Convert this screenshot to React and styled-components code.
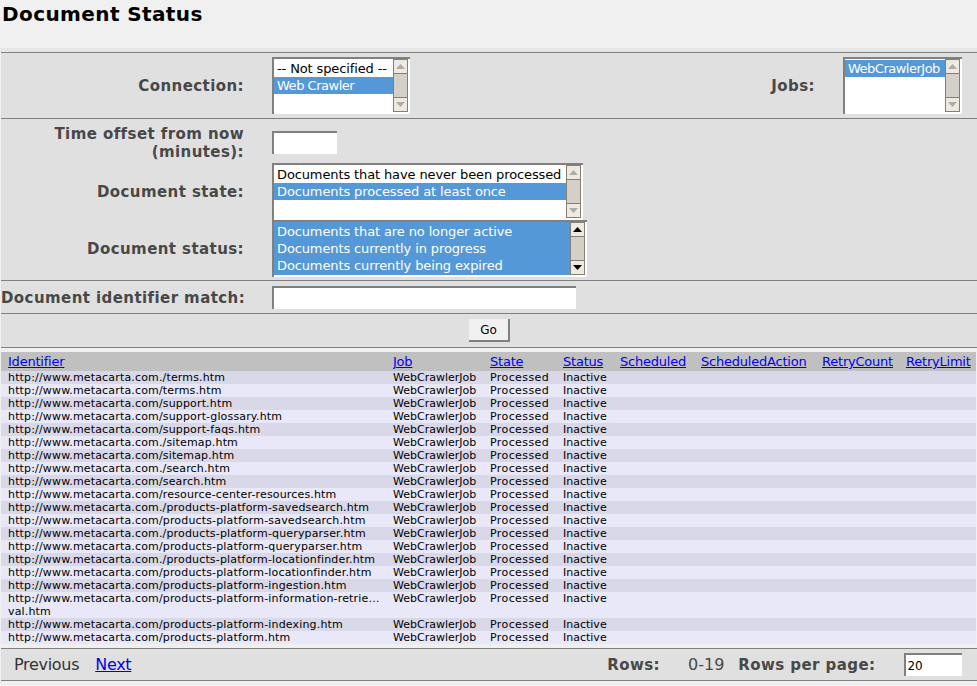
import React from 'react'
import styled, { createGlobalStyle } from 'styled-components'

const GlobalStyle = createGlobalStyle`
html, body {
  margin: 0;
  padding: 0;
  background: #f0f0f0;
  font-family: "DejaVu Sans", sans-serif;
}
* { box-sizing: border-box; }
`

const Page = styled.div`
width: 977px;
height: 686px;
overflow: hidden;
background: #f0f0f0;
`

const TitleBar = styled.h1`
margin: 0;
height: 48px;
padding: 3px 0 0 2px;
font-size: 20px;
line-height: 23px;
letter-spacing: 0.4px;
font-weight: 700;
color: #000;
`

const Strip = styled.div`
height: 4px;
background: #e6e6e6;
`

const Content = styled.div`
margin-left: 1px;
`

const Section = styled.section`
border-top: 1px solid #808080;
background: #e0e0e0;
height: ${(p) => p.$height}px;
`

const FieldStack = styled.div`
display: grid;
grid-template-columns: 243px 1fr;
column-gap: 28px;
align-items: center;
align-content: start;
grid-template-rows: ${(p) => p.$rows};
padding-top: ${(p) => p.$pad || 0}px;
height: 100%;
`

const Label = styled.label`
padding-top: ${(p) => p.$top || 0}px;
font-size: 15px;
line-height: 18px;
letter-spacing: 0.42px;
font-weight: 700;
color: #484848;
text-align: right;
white-space: ${(p) => (p.$nowrap ? 'nowrap' : 'normal')};
`

const ListBox = styled.div`
display: flex;
align-self: start;
width: ${(p) => p.$width}px;
height: 57px;
padding: 0 2px 2px 0;
background: #fff;
border-top: 2px solid #808080;
border-left: 2px solid #808080;
`

const ConnectionRow = styled.div`
display: grid;
grid-template-columns: 243px 415px 100px 1fr;
column-gap: 28px;
align-items: center;
height: 100%;

${ListBox} {
  align-self: center;
}
`

const Options = styled.div`
flex: 1;
min-width: 0;
overflow: hidden;
padding-top: 1px;
background: ${(p) => (p.$filled ? '#5598d7' : '#fff')};
`

const Option = styled.div`
height: 17px;
padding-left: 3px;
font-size: 13px;
line-height: 17px;
letter-spacing: ${(p) => p.$spacing ?? -0.12}px;
white-space: nowrap;
color: ${(p) => (p.$selected ? '#fff' : '#000')};
background: ${(p) => (p.$selected ? '#5598d7' : '#fff')};
`

const ScrollBar = styled.div`
display: flex;
flex-direction: column;
width: 15px;
background: #d4d0c8;
`

const ScrollButton = styled.div`
display: flex;
align-items: center;
justify-content: center;
height: 15px;
background: #eeeae2;
border: 1px solid #857f70;
`

const ScrollTrack = styled.div`
flex: 1;
border-left: 1px solid #857f70;
border-right: 1px solid #857f70;
`

const Arrow = ({ down, active }) => (
  <svg width="9" height="5" viewBox="0 0 9 5">
    <path d={down ? 'M0 0h9L4.5 5z' : 'M0 5h9L4.5 0z'} fill={active ? '#000' : '#b0aca4'} />
  </svg>
)

const Scroller = ({ active }) => (
  <ScrollBar>
    <ScrollButton><Arrow active={active} /></ScrollButton>
    <ScrollTrack />
    <ScrollButton><Arrow down active={active} /></ScrollButton>
  </ScrollBar>
)

const TextInput = styled.input`
display: block;
width: ${(p) => p.$width}px;
height: 23px;
padding: 0 0 0 1px;
font-family: "DejaVu Sans", sans-serif;
font-size: 12px;
color: #000;
background: #fff;
border: 0;
border-top: 2px solid #808080;
border-left: 2px solid #808080;
outline: none;
`

const ButtonRow = styled.div`
display: flex;
justify-content: center;
padding: 5px 0 0 1px;
`

const GoButton = styled.button`
width: 41px;
height: 23px;
padding: 0;
font-family: "DejaVu Sans", sans-serif;
font-size: 12px;
color: #000;
background: #f0f0f0;
border: 0;
border-right: 2px solid #808080;
border-bottom: 2px solid #808080;
`

const Results = styled.div`
border-top: 1px solid #808080;
padding: 4px 0;
`

const Table = styled.table`
width: 975px;
table-layout: fixed;
border-collapse: collapse;
`

const HeadCell = styled.th`
height: 19px;
padding: 0 0 0 ${(p) => (p.$first ? 7 : 0)}px;
background: #c0c0c0;
font-size: 13px;
line-height: 19px;
letter-spacing: -0.22px;
font-weight: 400;
text-align: left;
white-space: nowrap;
overflow: hidden;
`

const Link = styled.a`
color: #0000ee;
text-decoration: underline;
`

const Row = styled.tr`
background: ${(p) => (p.$odd ? '#e8e8f8' : '#d8d8e8')};
`

const Cell = styled.td`
padding: 0 0 0 ${(p) => (p.$first ? 7 : 0)}px;
font-size: 11px;
line-height: 13px;
letter-spacing: ${(p) => p.$spacing || 0}px;
vertical-align: top;
color: #000;
`

const Footer = styled.footer`
display: flex;
align-items: center;
height: 33px;
padding: 0 0 0 13px;
border-top: 1px solid #808080;
border-bottom: 1px solid #808080;
background: #e0e0e0;
font-size: 16px;
letter-spacing: -0.3px;
color: #333;
`

const PagerLink = styled(Link)`
margin-left: 16px;
`

const FooterLabel = styled.span`
font-size: 15px;
font-weight: 700;
letter-spacing: 0.42px;
color: #484848;
margin-left: ${(p) => p.$offset}px;
`

const RowRange = styled.span`
margin-left: 28px;
letter-spacing: 0;
color: #484848;
`

const PageSizeInput = styled(TextInput)`
margin-left: 29px;
`

const columns = [392, 97, 73, 57, 81, 121, 84, 70]
const headers = ['Identifier', 'Job', 'State', 'Status', 'Scheduled', 'ScheduledAction', 'RetryCount', 'RetryLimit']

const paths = [
  './terms.htm',
  '/terms.htm',
  '/support.htm',
  '/support-glossary.htm',
  '/support-faqs.htm',
  './sitemap.htm',
  '/sitemap.htm',
  './search.htm',
  '/search.htm',
  '/resource-center-resources.htm',
  './products-platform-savedsearch.htm',
  '/products-platform-savedsearch.htm',
  './products-platform-queryparser.htm',
  '/products-platform-queryparser.htm',
  './products-platform-locationfinder.htm',
  '/products-platform-locationfinder.htm',
  '/products-platform-ingestion.htm',
  '/products-platform-information-retrie…\nval.htm',
  '/products-platform-indexing.htm',
  '/products-platform.htm',
]

const Identifier = ({ path }) => {
  const [first, second] = `http://www.metacarta.com${path}`.split('\n')
  return second ? <>{first}<br />{second}</> : first
}

export default function App() {
  return (
    <Page>
      <GlobalStyle />
      <TitleBar>Document Status</TitleBar>
      <Strip />
      <Content>
        <Section $height={66}>
          <ConnectionRow>
            <Label>Connection:</Label>
            <ListBox $width={138}>
              <Options>
                <Option>-- Not specified --</Option>
                <Option $selected $spacing={-0.48}>Web Crawler</Option>
              </Options>
              <Scroller />
            </ListBox>
            <Label>Jobs:</Label>
            <ListBox $width={119}>
              <Options>
                <Option $selected $spacing={-0.5}>WebCrawlerJob</Option>
              </Options>
              <Scroller />
            </ListBox>
          </ConnectionRow>
        </Section>
        <Section $height={162}>
          <FieldStack $rows="41px 57px 57px" $pad={3}>
            <Label $top={1}>Time offset from now (minutes):</Label>
            <TextInput $width={65} />
            <Label>Document state:</Label>
            <ListBox $width={311}>
              <Options>
                <Option>Documents that have never been processed</Option>
                <Option $selected>Documents processed at least once</Option>
              </Options>
              <Scroller />
            </ListBox>
            <Label>Document status:</Label>
            <ListBox $width={315}>
              <Options $filled>
                <Option $selected>Documents that are no longer active</Option>
                <Option $selected>Documents currently in progress</Option>
                <Option $selected>Documents currently being expired</Option>
              </Options>
              <Scroller active />
            </ListBox>
          </FieldStack>
        </Section>
        <Section $height={33}>
          <FieldStack $rows="31px" $pad={1}>
            <Label $nowrap>Document identifier match:</Label>
            <TextInput $width={304} />
          </FieldStack>
        </Section>
        <Section $height={34}>
          <ButtonRow>
            <GoButton>Go</GoButton>
          </ButtonRow>
        </Section>
        <Results>
          <Table>
            <colgroup>
              {columns.map((w, i) => <col key={i} style={{ width: w }} />)}
            </colgroup>
            <thead>
              <tr>
                {headers.map((h, i) => (
                  <HeadCell key={h} $first={i === 0}><Link href="#">{h}</Link></HeadCell>
                ))}
              </tr>
            </thead>
            <tbody>
              {paths.map((path, i) => (
                <Row key={path} $odd={i % 2 === 1}>
                  <Cell $first $spacing={0.16}><Identifier path={path} /></Cell>
                  <Cell>WebCrawlerJob</Cell>
                  <Cell $spacing={0.4}>Processed</Cell>
                  <Cell>Inactive</Cell>
                  <Cell />
                  <Cell />
                  <Cell />
                  <Cell />
                </Row>
              ))}
            </tbody>
          </Table>
        </Results>
        <Footer>
          <span>Previous</span>
          <PagerLink href="#">Next</PagerLink>
          <FooterLabel $offset={476}>Rows:</FooterLabel>
          <RowRange>0-19</RowRange>
          <FooterLabel $offset={14}>Rows per page:</FooterLabel>
          <PageSizeInput $width={58} defaultValue="20" />
        </Footer>
      </Content>
    </Page>
  )
}
